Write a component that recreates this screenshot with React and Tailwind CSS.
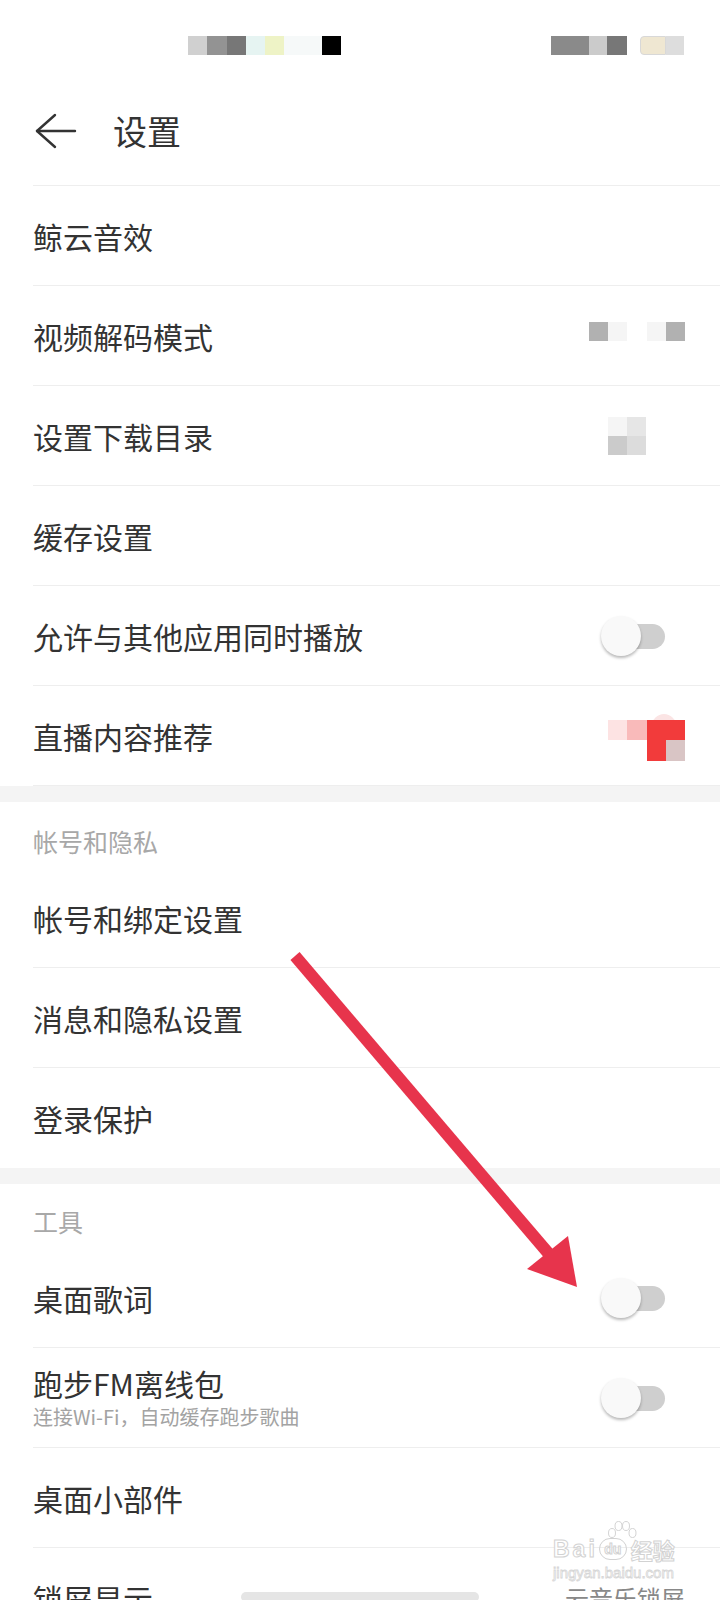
import React from "react";

function Toggle() {
  return (
    <div className="relative w-[64px] h-[40px] mr-[20px] shrink-0">
      <div className="absolute right-0 top-[8px] w-[58px] h-[25px] rounded-full bg-[#cfcfcf]" />
      <div className="absolute left-0 top-0 w-[40px] h-[40px] rounded-full bg-[#f9f9f9] shadow-[0_2px_3px_rgba(0,0,0,0.28)]" />
    </div>
  );
}

function Row({ title, subtitle, right, border = true }) {
  return (
    <div
      className={
        "ml-[33px] pr-[35px] h-[100px] flex items-center justify-between " +
        (border ? "border-b border-[#eeeeee]" : "")
      }
    >
      <div className="flex flex-col">
        <div className="text-[30px] leading-none text-[#333333]">{title}</div>
        {subtitle && (
          <div className="mt-[9px] text-[20px] leading-none text-[#a3a3a3]">{subtitle}</div>
        )}
      </div>
      {right}
    </div>
  );
}

function SectionHeader({ title, h }) {
  return (
    <div className={"pl-[33px] flex items-end pb-[14px] " + h}>
      <div className="text-[25px] leading-none text-[#a8a8a8]">{title}</div>
    </div>
  );
}

function Band() {
  return <div className="h-[16px] bg-[#f4f4f4]" />;
}

export default function App() {
  return (
    <div className="relative w-[720px] h-[1600px] overflow-hidden bg-white font-['Noto_Sans_CJK_SC','Noto_Sans',sans-serif]">
      {/* status bar */}
      <div className="h-[76px] flex items-start justify-between pt-[36px] pl-[188px] pr-[36px]">
        <div className="flex h-[19px]">
          <div className="w-[19px] bg-[#d0d0d0]" />
          <div className="w-[20px] bg-[#939393]" />
          <div className="w-[19px] bg-[#777777]" />
          <div className="w-[19px] bg-[#e6f4f2]" />
          <div className="w-[19px] bg-[#eef3c6]" />
          <div className="w-[38px] bg-[#f6f9f9]" />
          <div className="w-[19px] bg-[#000000]" />
        </div>
        <div className="flex h-[19px]">
          <div className="w-[38px] bg-[#8a8a8a]" />
          <div className="w-[18px] bg-[#cbcbcb]" />
          <div className="w-[20px] bg-[#777777]" />
          <div className="w-[13px]" />
          <div className="w-[26px] bg-[#efe7d2] rounded-l-[4px] border border-[#d8d8d8]" />
          <div className="w-[18px] bg-[#dddddd]" />
        </div>
      </div>

      {/* header */}
      <div className="h-[109px] flex items-center pl-[34px]">
        <svg width="44" height="36" viewBox="0 0 44 36" fill="none" stroke="#333333" strokeWidth="2.4" strokeLinecap="round" strokeLinejoin="round">
          <path d="M3 18 H41" />
          <path d="M21 2 L3 18 L21 34" />
        </svg>
        <div className="ml-[35px] text-[34px] leading-none text-[#333333]">设置</div>
      </div>
      <div className="ml-[33px] h-px bg-[#eeeeee]" />

      {/* section 1 */}
      <Row title="鲸云音效" />
      <Row
        title="视频解码模式"
        right={
          <div className="flex h-[19px] mb-[9px]">
            <div className="w-[19px] bg-[#b1b1b1]" />
            <div className="w-[19px] bg-[#f5f5f5]" />
            <div className="w-[20px]" />
            <div className="w-[19px] bg-[#f5f5f5]" />
            <div className="w-[19px] bg-[#b1b1b1]" />
          </div>
        }
      />
      <Row
        title="设置下载目录"
        right={
          <div className="grid grid-cols-[19px_19px] grid-rows-[19px_19px] mr-[39px]">
            <div className="bg-[#f5f5f5]" />
            <div className="bg-[#e6e6e6]" />
            <div className="bg-[#cbcbcb]" />
            <div className="bg-[#dcdcdc]" />
          </div>
        }
      />
      <Row title="缓存设置" />
      <Row title="允许与其他应用同时播放" right={<Toggle />} />
      <Row
        title="直播内容推荐"
        right={
          <div className="relative mt-[9px]">
            <div className="absolute left-[44px] top-[-6px] w-[24px] h-[14px] rounded-t-full bg-[#fbe4e4]" />
            <div className="relative grid grid-cols-[19px_20px_19px_19px] grid-rows-[20px_21px]">
              <div className="bg-[#fde3e3]" />
              <div className="bg-[#f9baba]" />
              <div className="bg-[#f23b3b]" />
              <div className="bg-[#f23b3b]" />
              <div />
              <div />
              <div className="bg-[#f23b3b]" />
              <div className="bg-[#d9c5c5]" />
            </div>
          </div>
        }
      />
      <Band />

      {/* section 2 */}
      <SectionHeader title="帐号和隐私" h="h-[66px]" />
      <Row title="帐号和绑定设置" />
      <Row title="消息和隐私设置" />
      <Row title="登录保护" border={false} />
      <Band />

      {/* section 3 */}
      <SectionHeader title="工具" h="h-[64px]" />
      <Row title="桌面歌词" right={<Toggle />} />
      <Row title="跑步FM离线包" subtitle="连接Wi-Fi，自动缓存跑步歌曲" right={<Toggle />} />
      <Row title="桌面小部件" />
      <Row
        title="锁屏显示"
        border={false}
        right={<div className="text-[24px] leading-none text-[#888888]">云音乐锁屏</div>}
      />

      {/* red annotation arrow */}
      <svg className="absolute left-0 top-0 pointer-events-none" width="720" height="1600" viewBox="0 0 720 1600">
        <line x1="295" y1="956" x2="549" y2="1254" stroke="#e7344c" strokeWidth="12" />
        <polygon points="527,1269 568,1236 577,1287" fill="#e7344c" />
      </svg>

      {/* baidu watermark */}
      <div className="absolute left-[553px] top-[1519px] w-[135px] pointer-events-none">
        <svg className="absolute left-[54px] top-[1px]" width="30" height="22" viewBox="0 0 30 22" fill="none" stroke="#d4d4d4" strokeWidth="1">
          <ellipse cx="5" cy="13" rx="3.5" ry="4.5" />
          <ellipse cx="11.5" cy="6" rx="3.5" ry="4.5" />
          <ellipse cx="19" cy="6" rx="3.5" ry="4.5" />
          <ellipse cx="25.5" cy="13" rx="3.5" ry="4.5" />
        </svg>
        <div className="flex items-center mt-[19px] h-[22px]">
          <span className="font-['Liberation_Sans',sans-serif] font-bold text-[23px] tracking-[3px] leading-none text-white [-webkit-text-stroke:1px_#d2d2d2]">Bai</span>
          <span className="ml-[1px] w-[28px] h-[22px] rounded-full border border-[#d2d2d2] flex items-center justify-center font-['Liberation_Sans',sans-serif] font-bold text-[14px] leading-none text-white [-webkit-text-stroke:1px_#d2d2d2]">du</span>
          <span className="ml-[4px] text-[22px] leading-none font-bold text-white [-webkit-text-stroke:1px_#d2d2d2]">经验</span>
        </div>
        <div className="mt-[5px] font-['Liberation_Sans',sans-serif] text-[15px] leading-none text-white [-webkit-text-stroke:0.8px_#d6d6d6]">jingyan.baidu.com</div>
      </div>

      {/* home indicator */}
      <div className="absolute left-[241px] top-[1592px] w-[238px] h-[10px] rounded-full bg-[#e5e5e5]" />
    </div>
  );
}
